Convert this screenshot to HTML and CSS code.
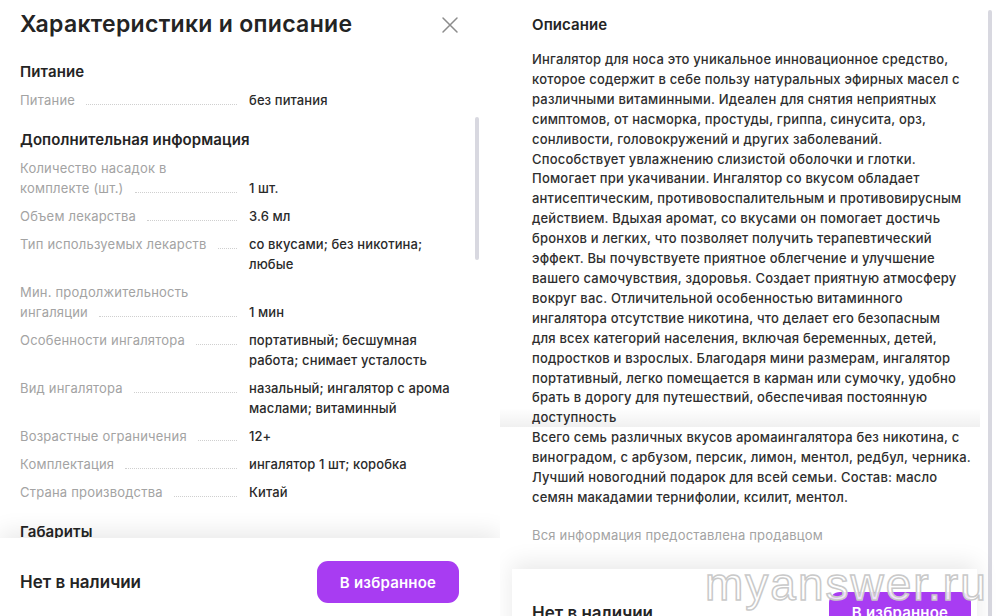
FILE: index.html
```html
<!DOCTYPE html>
<html lang="ru">
<head>
<meta charset="utf-8">
<title>Характеристики и описание</title>
<link rel="stylesheet" href="styles.css">
</head>
<body>
<div class="screen">
  <section class="panel panel-left">
    <header class="panel-head">
      <h1 class="title">Характеристики и описание</h1>
      <button class="close" aria-label="Закрыть">
        <svg width="18" height="18" viewBox="0 0 18 18"><path d="M2 2 L16 16 M16 2 L2 16" stroke="#8c8c8c" stroke-width="1.5" fill="none" stroke-linecap="round"/></svg>
      </button>
    </header>
    <div class="panel-body">
      <div class="group">
        <h2 class="group-title">Питание</h2>
        <div class="row"><div class="label"><span class="label-text">Питание</span><span class="leader"></span></div><div class="value">без питания</div></div>
      </div>
      <div class="group">
        <h2 class="group-title">Дополнительная информация</h2>
        <div class="row row-end"><div class="label label-multi"><span class="label-line">Количество насадок в</span><span class="label-text">комплекте (шт.)</span><span class="leader"></span></div><div class="value">1 шт.</div></div>
        <div class="row"><div class="label"><span class="label-text">Объем лекарства</span><span class="leader"></span></div><div class="value">3.6 мл</div></div>
        <div class="row"><div class="label"><span class="label-text">Тип используемых лекарств</span><span class="leader"></span></div><div class="value">со вкусами; без никотина;<br>любые</div></div>
        <div class="row row-end"><div class="label label-multi"><span class="label-line">Мин. продолжительность</span><span class="label-text">ингаляции</span><span class="leader"></span></div><div class="value">1 мин</div></div>
        <div class="row"><div class="label"><span class="label-text">Особенности ингалятора</span><span class="leader"></span></div><div class="value">портативный; бесшумная<br>работа; снимает усталость</div></div>
        <div class="row"><div class="label"><span class="label-text">Вид ингалятора</span><span class="leader"></span></div><div class="value">назальный; ингалятор с арома<br>маслами; витаминный</div></div>
        <div class="row"><div class="label"><span class="label-text">Возрастные ограничения</span><span class="leader"></span></div><div class="value">12+</div></div>
        <div class="row"><div class="label"><span class="label-text">Комплектация</span><span class="leader"></span></div><div class="value">ингалятор 1 шт; коробка</div></div>
        <div class="row"><div class="label"><span class="label-text">Страна производства</span><span class="leader"></span></div><div class="value">Китай</div></div>
      </div>
      <div class="group">
        <h2 class="group-title">Габариты</h2>
      </div>
    </div>
    <div class="scrollbar scrollbar-left"></div>
    <footer class="panel-foot">
      <span class="stock">Нет в наличии</span>
      <button class="fav">В избранное</button>
    </footer>
  </section>

  <section class="panel panel-right">
    <div class="desc">
      <h2 class="group-title desc-title">Описание</h2>
      <p class="desc-text">Ингалятор для носа это уникальное инновационное средство,<br>которое содержит в себе пользу натуральных эфирных масел с<br>различными витаминными. Идеален для снятия неприятных<br>симптомов, от насморка, простуды, гриппа, синусита, орз,<br>сонливости, головокружений и других заболеваний.<br>Способствует увлажнению слизистой оболочки и глотки.<br>Помогает при укачивании. Ингалятор со вкусом обладает<br>антисептическим, противовоспалительным и противовирусным<br>действием. Вдыхая аромат, со вкусами он помогает достичь<br>бронхов и легких, что позволяет получить терапевтический<br>эффект. Вы почувствуете приятное облегчение и улучшение<br>вашего самочувствия, здоровья. Создает приятную атмосферу<br>вокруг вас. Отличительной особенностью витаминного<br>ингалятора отсутствие никотина, что делает его безопасным<br>для всех категорий населения, включая беременных, детей,<br>подростков и взрослых. Благодаря мини размерам, ингалятор<br>портативный, легко помещается в карман или сумочку, удобно<br>брать в дорогу для путешествий, обеспечивая постоянную<br>доступность<br>Всего семь различных вкусов аромаингалятора без никотина, с<br>виноградом, с арбузом, персик, лимон, ментол, редбул, черника.<br>Лучший новогодний подарок для всей семьи. Состав: масло<br>семян макадамии тернифолии, ксилит, ментол.</p>
      <p class="desc-note">Вся информация предоставлена продавцом</p>
    </div>
    <footer class="panel-foot panel-foot-right">
      <span class="stock">Нет в наличии</span>
      <button class="fav">В избранное</button>
    </footer>
    <div class="seam"></div>
    <div class="scrollbar scrollbar-right"></div>
  </section>

  <div class="watermark">myanswer.ru</div>
</div>
</body>
</html>
```
FILE: styles.css
```css
* { box-sizing: border-box; }
html, body { margin: 0; padding: 0; background: #fff; }
body {
  font-family: Inter, "Noto Sans", "Liberation Sans", sans-serif;
  color: #242424;
}
.screen {
  position: relative;
  width: 1000px;
  height: 616px;
  overflow: hidden;
  display: flex;
  background: #fff;
}
.panel {
  position: relative;
  height: 616px;
  overflow: hidden;
  display: flex;
  flex-direction: column;
  background: #fff;
}
.panel-left { width: 500px; }
.panel-right { width: 500px; padding-left: 12px; }

.panel-head {
  height: 50px;
  padding: 9px 41px 0 20px;
  display: flex;
  justify-content: space-between;
  align-items: flex-start;
  flex-shrink: 0;
}
.title {
  margin: 0;
  font-size: 23px;
  line-height: 30px;
  font-weight: 600;
  letter-spacing: 0.3px;
  color: #242424;
}
.close {
  border: 0;
  background: none;
  padding: 0;
  margin-top: 7px;
  width: 18px;
  height: 18px;
  cursor: pointer;
}
.panel-body {
  flex: 1;
  overflow: hidden;
  padding: 12px 40px 0 20px;
}
.group { margin-bottom: 20px; }
.group-title {
  margin: 0 0 8px;
  font-size: 15px;
  line-height: 20px;
  font-weight: 600;
  letter-spacing: 0.1px;
  color: #242424;
}
.row {
  display: flex;
  align-items: flex-start;
  font-size: 13px;
  line-height: 20px;
  letter-spacing: 0.2px;
  margin-bottom: 8px;
}
.row:last-child { margin-bottom: 0; }
.row-end { align-items: flex-end; }
.label {
  width: 217px;
  margin-right: 12px;
  display: flex;
  flex-wrap: nowrap;
  align-items: flex-end;
  flex-shrink: 0;
}
.label-multi { flex-wrap: wrap; }
.label-line {
  flex-basis: 100%;
  color: #a3a3a3;
}
.label-text {
  color: #a3a3a3;
  flex: 0 1 auto;
}
.leader {
  flex: 1 0 14px;
  margin-left: 11px;
  margin-bottom: 5px;
  border-bottom: 1px dotted #cfcfcf;
}
.value {
  flex: 1;
  color: #2a2a2a;
  font-weight: 500;
  letter-spacing: 0.1px;
}

.panel-foot {
  flex-shrink: 0;
  height: 78px;
  padding: 10px 41px 0 20px;
  display: flex;
  justify-content: space-between;
  align-items: center;
  background: #fff;
  box-shadow: 0 -6px 22px rgba(0, 0, 0, 0.09);
  position: relative;
  z-index: 1;
}
.panel-foot-right {
  width: 465px;
  padding-right: 6px;
}
.stock {
  font-size: 17px;
  line-height: 24px;
  font-weight: 600;
  color: #242424;
}
.fav {
  width: 142px;
  height: 42px;
  border: 0;
  border-radius: 11px;
  background: #a83cf2;
  color: #fff;
  font-family: inherit;
  font-size: 15px;
  font-weight: 600;
  letter-spacing: 0.2px;
  cursor: pointer;
}

.desc {
  width: 465px;
  padding: 15px 10px 24px 20px;
  flex-shrink: 0;
}
.desc-title { margin-bottom: 15px; }
.desc-text {
  margin: 0;
  font-size: 13px;
  line-height: 19.9px;
  font-weight: 500;
  letter-spacing: 0.2px;
  color: #2e2e2e;
  white-space: nowrap;
}
.desc-note {
  margin: 17px 0 0;
  font-size: 13px;
  line-height: 20px;
  letter-spacing: 0.2px;
  color: #a3a3a3;
}

.scrollbar {
  position: absolute;
  width: 4px;
  border-radius: 2px;
  background: #d8d8e0;
}
.scrollbar-left { left: 475px; top: 117px; height: 143px; }
.scrollbar-right { left: 488px; top: 10px; height: 620px; }

.seam {
  position: absolute;
  left: 0;
  width: 480px;
  top: 408px;
  height: 19px;
  background: linear-gradient(to bottom, rgba(0,0,0,0), rgba(0,0,0,0.06));
  pointer-events: none;
}

.watermark {
  position: absolute;
  left: 705px;
  top: 556px;
  font-family: "Liberation Sans", Arial, sans-serif;
  font-size: 46px;
  line-height: 56px;
  letter-spacing: 2px;
  color: rgba(255, 255, 255, 0.85);
  -webkit-text-stroke: 1.5px #c9c9c9;
  pointer-events: none;
  z-index: 5;
}
```
